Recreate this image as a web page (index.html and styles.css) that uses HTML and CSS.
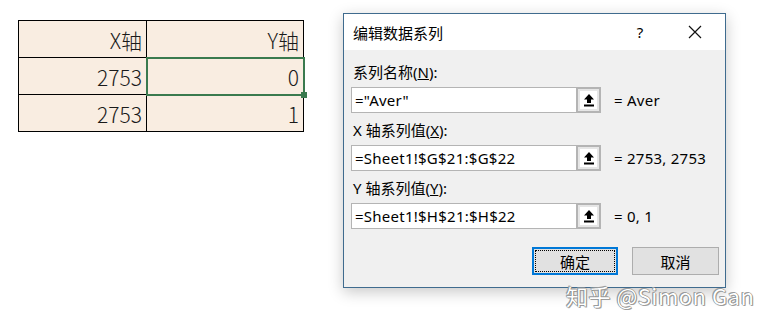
FILE: index.html
```html
<!DOCTYPE html>
<html lang="zh">
<head>
<meta charset="utf-8">
<link rel="stylesheet" href="styles.css">
</head>
<body>
<div class="page">
  <table class="sheet">
    <tr><td class="c1">X轴</td><td class="c2">Y轴</td></tr>
    <tr><td class="c1">2753</td><td class="c2 sel">0<span class="handle"></span></td></tr>
    <tr><td class="c1">2753</td><td class="c2">1</td></tr>
  </table>

  <div class="dialog">
    <div class="titlebar">
      <span class="title">编辑数据系列</span>
      <span class="help">?</span>
      <span class="close"><svg width="14" height="14" viewBox="0 0 14 14"><path d="M1 1L13 13M13 1L1 13" stroke="#111" stroke-width="1.2" fill="none"/></svg></span>
    </div>
    <div class="body">
      <div class="label">系列名称(<u>N</u>):</div>
      <div class="field">
        <div class="input">="Aver"</div>
        <div class="pick"><span class="pick-in"><svg width="12" height="14" viewBox="0 0 12 14"><path d="M6 1L1 6.5H4V10H8V6.5H11Z" fill="#000"/><rect x="1" y="11.5" width="10" height="2" fill="#000"/></svg></span></div>
        <div class="value">= Aver</div>
      </div>
      <div class="label gap">X 轴系列值(<u>X</u>):</div>
      <div class="field">
        <div class="input">=Sheet1!$G$21:$G$22</div>
        <div class="pick"><span class="pick-in"><svg width="12" height="14" viewBox="0 0 12 14"><path d="M6 1L1 6.5H4V10H8V6.5H11Z" fill="#000"/><rect x="1" y="11.5" width="10" height="2" fill="#000"/></svg></span></div>
        <div class="value">= 2753, 2753</div>
      </div>
      <div class="label gap">Y 轴系列值(<u>Y</u>):</div>
      <div class="field">
        <div class="input">=Sheet1!$H$21:$H$22</div>
        <div class="pick"><span class="pick-in"><svg width="12" height="14" viewBox="0 0 12 14"><path d="M6 1L1 6.5H4V10H8V6.5H11Z" fill="#000"/><rect x="1" y="11.5" width="10" height="2" fill="#000"/></svg></span></div>
        <div class="value">= 0, 1</div>
      </div>
      <div class="buttons">
        <div class="btn ok"><span class="focus">确定</span></div>
        <div class="btn">取消</div>
      </div>
    </div>
  </div>
</div>
<div class="watermark">知乎 @Simon Gan</div>
</body>
</html>
```
FILE: styles.css
```css
html, body {
  margin: 0;
  padding: 0;
  background: #fff;
  width: 775px;
  height: 322px;
  overflow: hidden;
}
body {
  font-family: "Noto Sans", "Noto Sans CJK SC", sans-serif;
  position: relative;
}
.page {
  display: flex;
  align-items: flex-start;
  padding: 13px 0 0 18px;
}
.sheet {
  border-collapse: collapse;
  margin-top: 7px;
  font-family: "Noto Sans CJK SC", sans-serif;
  font-weight: 300;
  font-size: 21px;
  color: #1a1a1a;
}
.sheet td {
  border: 1px solid #000;
  background: #f9ede1;
  height: 37px;
  padding: 2px 4px 0 0;
  text-align: right;
  box-sizing: border-box;
  line-height: 1;
}
.sheet td.c1 { width: 128px; }
.sheet td.c2 { width: 157px; }
.sheet td.sel {
  position: relative;
  outline: 2px solid #3a7a4e;
  outline-offset: -1px;
}
.handle {
  position: absolute;
  right: -4px;
  bottom: -4px;
  width: 6px;
  height: 6px;
  background: #3a7a4e;
}
.dialog {
  margin-left: 39px;
  width: 383px;
  height: 275px;
  box-sizing: border-box;
  border: 1px solid #3f6b8e;
  background: #f0f0f0;
  box-shadow: 0 4px 14px rgba(0,0,0,0.22);
  font-size: 15px;
  color: #000;
}
.titlebar {
  height: 36px;
  background: #fff;
  display: flex;
  align-items: center;
  padding-left: 9px;
}
.title { flex: 1; }
.help {
  width: 20px;
  text-align: center;
  margin-right: 38px;
}
.close {
  display: flex;
  margin-right: 23px;
}
.body {
  padding: 12px 6px 0 7px;
}
.label {
  height: 20px;
  line-height: 20px;
  padding-left: 2px;
  margin-bottom: 5px;
}
.label.gap { margin-top: 7px; }
.field {
  display: flex;
  align-items: center;
}
.input {
  width: 225px;
  height: 26px;
  box-sizing: border-box;
  border: 1px solid #b4b4b4;
  border-right: none;
  background: #fff;
  line-height: 24px;
  padding-left: 3px;
  white-space: nowrap;
  letter-spacing: 0.25px;
}
.pick {
  width: 25px;
  height: 26px;
  box-sizing: border-box;
  border: 2px solid #b4b4b4;
  background: #e6e6e6;
  display: flex;
  align-items: center;
  justify-content: center;
}
.pick-in {
  width: 17px;
  height: 18px;
  background: #fff;
  display: flex;
  align-items: center;
  justify-content: center;
}
.value {
  margin-left: 13px;
  letter-spacing: 0.25px;
}
.buttons {
  display: flex;
  justify-content: flex-end;
  gap: 14px;
  margin-top: 18px;
}
.btn {
  width: 87px;
  height: 28px;
  box-sizing: border-box;
  border: 1px solid #adadad;
  background: #e1e1e1;
  display: flex;
  align-items: center;
  justify-content: center;
}
.btn.ok {
  width: 86px;
  border: 2px solid #0078d7;
  padding: 1px;
}
.focus {
  flex: 1;
  align-self: stretch;
  display: flex;
  align-items: center;
  justify-content: center;
  border: 1px dotted #000;
}
.watermark {
  position: absolute;
  left: 566px;
  top: 279px;
  font-size: 22px;
  font-family: "Noto Sans CJK SC", sans-serif;
  color: #fff;
  letter-spacing: 0.5px;
  text-shadow: 0 0 1px #666, 0 0 1px #666, 1px 1px 0 #aaa, -1px -1px 0 #aaa;
}
```
